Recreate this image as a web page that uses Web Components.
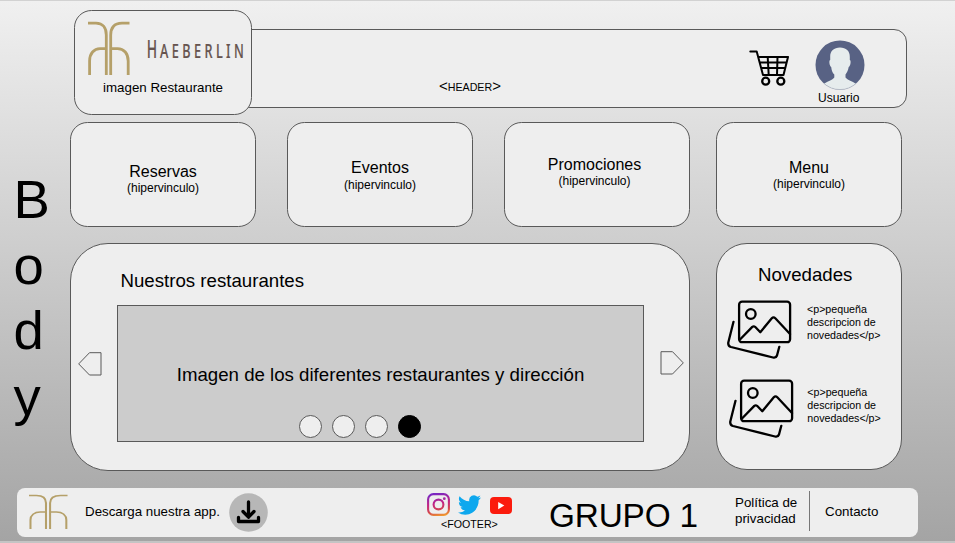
<!DOCTYPE html>
<html lang="es">
<head>
<meta charset="utf-8">
<title>Haeberlin</title>
<style>
html,body{margin:0;height:100%;overflow:hidden}
body{font-family:"Liberation Sans",Arial,sans-serif;color:#000}
</style>
</head>
<body>
<hb-page></hb-page>
<script>
const define=(name,html)=>customElements.define(name,class extends HTMLElement{
  constructor(){super();const t=document.createElement('template');t.innerHTML=html;
    this.attachShadow({mode:'open'}).append(t.content.cloneNode(true));}
});

/* Icons */
define('hb-emblem',`<style>:host{display:block;width:42px;height:54px}svg{display:block;width:100%;height:100%}</style>
<svg viewBox="0 0 42 54" preserveAspectRatio="none" fill="none" stroke="#b5a069" stroke-width="var(--sw,2.8)">
<path d="M0 2.200H8C15 2.200 18.300 7 18.300 14V54M41.500 2.200H34C26 2.200 22.700 7 22.700 14V54M1.600 54V40C1.600 32.500 6 27.700 12 27.700H18M23 27.700H29.500C36 27.700 40.200 32.500 40.200 40V54"/></svg>`);
define('hb-wordmark',`<style>:host{display:block;width:102px;height:38px}svg{display:block;overflow:visible}text{font-family:"Noto Sans","Open Sans",sans-serif;font-weight:500;fill:#66544f;stroke:#66544f;stroke-width:.2}</style>
<svg width="102" height="38"><g transform="scale(.65 1)"><text transform="translate(-2 29) scale(.87 1)" x="0" y="0" font-size="24.500">H</text><text x="18.500" y="29" font-size="19.500" textLength="129" lengthAdjust="spacing">AEBERLIN</text></g></svg>`);
define('hb-cart',`<style>:host{display:block;width:42px;height:38px}svg{display:block}</style>
<svg width="42" height="38" fill="none" stroke="#000" stroke-width="2" stroke-linecap="round" stroke-linejoin="round">
<path d="M1.300 2.600H7.700L14 26H34.500L39 7.900H9.200M10.600 13.400H37.500M12 19H36M18.700 8L19.700 26M28.500 8L28 26"/>
<circle cx="16.700" cy="32.200" r="3.500" stroke-width="2.300"/><circle cx="31.800" cy="32.200" r="3.500" stroke-width="2.300"/></svg>`);
define('hb-avatar',`<style>:host{display:block;width:50px;height:50px}svg{display:block}</style>
<svg width="50" height="50"><defs><clipPath id="c"><circle cx="25" cy="25" r="24.500"/></clipPath></defs>
<circle cx="25" cy="25" r="24.500" fill="#586284"/><path clip-path="url(#c)" fill="#e6eced" d="M25 7.500C31 7.500 35 11 34.800 17V20C36.300 20.200 35.600 26 33.700 27C33 31 31.500 33 30.500 34.500V37.500C33 40.500 38 41 43 45.500V50H7V45.500C12 41 17 40.500 19.300 37.500V34.500C17.500 33 16.600 30.500 16.200 27C14.400 26 13.700 20.200 15.200 20V17C14.900 11 19 7.500 25 7.500Z"/><path d="M8.500 43.200A24.500 24.500 0 0 0 41.500 43.200" fill="none" stroke="#a9b0bd" stroke-width=".6"/></svg>`);
define('hb-pictures',`<style>:host{display:block;width:66px;height:60px}svg{display:block}</style>
<svg width="66" height="60" fill="none" stroke="#000" stroke-width="2.300" stroke-linecap="round" stroke-linejoin="round">
<rect x="12.100" y="1.700" width="51" height="40.500" rx="3"/><circle cx="23.800" cy="14" r="4.800"/>
<path d="M13 39.500L25.300 26.900Q26.800 25.700 28.300 27L33.300 32.200L44.800 18.300Q46.500 16.500 48.300 18.300L63 34M6.500 21.800L1.300 42.500Q.8 46 4 47L46 57.500Q49 58.200 50 55.500L52.300 46.800"/></svg>`);
define('hb-download',`<style>:host{display:block;width:39px;height:39px}svg{display:block}</style>
<svg width="39" height="39" fill="none" stroke="#000" stroke-width="3.300" stroke-linecap="round" stroke-linejoin="round"><circle cx="19.500" cy="19.500" r="19.300" fill="#b7b7b7" stroke="none"/>
<path d="M19.500 9V23.500M14 18.500L19.500 24.200L25 18.500"/><path d="M9.500 24.500V28.500H29.500V24.500"/></svg>`);
define('hb-instagram',`<style>:host{display:block;width:23px;height:23px}svg{display:block}</style>
<svg width="23" height="23" fill="none" stroke="url(#g)"><defs><linearGradient id="g" gradientUnits="userSpaceOnUse" x1="9" y1="0" x2="14" y2="23"><stop stop-color="#7627c4"/><stop offset=".45" stop-color="#c32483"/><stop offset=".75" stop-color="#d3474f"/><stop offset="1" stop-color="#f09a30"/></linearGradient></defs>
<rect x="1.100" y="1.100" width="20.800" height="20.800" rx="5.300" stroke-width="2.100"/><circle cx="11.500" cy="11.500" r="4.900" stroke-width="2.100"/><circle cx="17.300" cy="5.700" r="1.400" fill="#a52aa0" stroke="none"/></svg>`);
define('hb-twitter',`<style>:host{display:block;width:23px;height:20px}svg{display:block;width:100%;height:100%}</style>
<svg viewBox="0 2 24 20" preserveAspectRatio="none" fill="#0ea8ee"><path d="M23.950 4.570a10 10 0 01-2.820.770 4.960 4.960 0 002.160-2.720c-.950.550-2 .950-3.130 1.180a4.920 4.920 0 00-8.380 4.480C7.690 8.100 4.070 6.130 1.640 3.160a4.820 4.820 0 00-.670 2.480c0 1.710.870 3.210 2.190 4.100a4.900 4.900 0 01-2.230-.620v.060a4.920 4.920 0 003.950 4.830 5 5 0 01-2.210.080 4.940 4.940 0 004.600 3.420A9.870 9.870 0 010 19.540a14 14 0 007.550 2.210c9.050 0 14-7.500 14-13.980 0-.210 0-.420-.020-.630a9.940 9.940 0 002.460-2.550z"/></svg>`);
define('hb-youtube',`<style>:host{display:block;width:22px;height:17px}svg{display:block}</style>
<svg width="22" height="17"><rect width="22" height="17" rx="4" fill="#fb1b0d"/><path d="M8.200 5V12.200L14.300 8.600Z" fill="#fff"/></svg>`);
define('hb-arrow',`<style>:host{display:block;width:24px;height:24px}:host([left]) svg{transform:scaleX(-1)}svg{display:block}</style>
<svg width="24" height="24" fill="none" stroke="#595959"><path d="M1 .700H12.500L23.300 11.900L12.500 23H1Z"/></svg>`);

/* Header */
define('hb-header',`<style>
:host{display:flex;align-items:flex-start;padding:9px 0 0 74px;height:112px;box-sizing:border-box}
.logo{box-sizing:border-box;width:178px;height:104.500px;border:1px solid #595959;border-radius:17.500px;background:#eee;z-index:1;padding:10px 0 0 13px;flex:none}
.brand{display:flex}.brand hb-wordmark{margin:8px 0 0 18px}
.logo p{margin:5px 0 0 15px;font-size:13.333px;line-height:16px}
.bar{box-sizing:border-box;display:flex;align-items:flex-start;width:670px;height:79px;margin:19px 0 0 -15px;border:1px solid #595959;border-radius:13px;background:#eee}
.title{margin:47px 0 0 201px;width:62px;font-size:15px;line-height:18px;white-space:nowrap}
.title span{font-size:10.667px}
hb-cart{margin:18.500px 0 0 248px}
.user{margin:10px 0 0 24px;width:50px;font-size:12px;line-height:15px}
.user div{margin:1px 0 0 3px}
</style>
<div class="logo"><div class="brand"><hb-emblem></hb-emblem><hb-wordmark></hb-wordmark></div><p>imagen Restaurante</p></div>
<div class="bar"><div class="title">&lt;<span>HEADER</span>&gt;</div><hb-cart></hb-cart><div class="user"><hb-avatar></hb-avatar><div>Usuario</div></div></div>`);

/* Link card */
define('hb-link-card',`<style>
:host{display:block;box-sizing:border-box;width:186px;height:105px;border:1px solid #595959;border-radius:17.500px;background:#eee;text-align:center;padding-top:var(--top,36px);padding-right:var(--shift,0)}
.t{font-size:16px;line-height:18px}.s{font-size:12px;line-height:15px;padding-top:var(--sub,0)}
</style><div class="t"><slot></slot></div><div class="s">(hipervinculo)</div>`);

/* Carousel */
define('hb-carousel',`<style>
:host{display:block;box-sizing:border-box;width:620px;height:228px;border:1px solid #595959;border-radius:38px;background:#eee;padding:26px 7px 0 7px}
h2{margin:0 0 0 42.500px;font-size:18.667px;font-weight:400;line-height:22px}
.row{display:flex;margin-top:13px}
.row hb-arrow{margin-top:47px;flex:none}.row hb-arrow[right]{margin:46px 0 0 16px}
.pic{box-sizing:border-box;flex:none;width:527px;height:137px;margin-left:15px;border:1px solid #595959;background:#ccc;font-size:18.667px;line-height:22px;text-align:center;padding-top:58px}
.dots{display:flex;gap:10px;margin:29px 0 0 181px}
.dots i{box-sizing:border-box;width:23px;height:23px;border:1px solid #595959;border-radius:50%;background:#eee}
.dots i:last-child{background:#000;border-color:#000}
</style><h2>Nuestros restaurantes</h2>
<div class="row"><hb-arrow left></hb-arrow><div class="pic">Imagen de los diferentes restaurantes y dirección<div class="dots"><i></i><i></i><i></i><i></i></div></div><hb-arrow right></hb-arrow></div>`);

/* News */
define('hb-news-item',`<style>:host{display:flex;height:78px}p{margin:var(--drop,2.500px) 0 0 var(--gap,14px);font-size:10.667px;line-height:13px;white-space:nowrap}</style>
<hb-pictures></hb-pictures><p>&lt;p&gt;pequeña<br>descripcion de<br>novedades&lt;/p&gt;</p>`);
define('hb-news',`<style>
:host{display:block;box-sizing:border-box;width:186px;height:226.500px;border:1px solid #595959;border-radius:31px;background:#eee;padding:20px 0 0 10px}
h2{margin:0 0 14px 31px;font-size:18.667px;font-weight:400;line-height:22px}
.second{margin:1px 0 0 2px;--gap:12.300px;--drop:7px}
</style><h2>Novedades</h2><hb-news-item></hb-news-item><hb-news-item class="second"></hb-news-item>`);

/* Footer */
define('hb-footer',`<style>
:host{display:flex;align-items:flex-start;box-sizing:border-box;width:901px;height:48.500px;margin-left:17px;border-radius:8px;background:#eee;font-size:13.333px;line-height:16px;white-space:nowrap}
hb-emblem{width:39px;height:35px;margin:5.500px 0 0 12px;--sw:2.2}
.app{margin:16px 0 0 17px;width:135px}
hb-download{margin:4.500px 0 0 8.500px}
.social{width:85px;margin:5px 0 0 159.500px}
.icons{display:flex;align-items:flex-start}.icons hb-twitter{margin:2px 0 0 8px}.icons hb-youtube{margin:4px 0 0 9px}
.social p{margin:2px 0 0 14px;font-size:10.667px;line-height:13px}
.group{margin:8px 0 0 37px;width:150px;font-size:33.333px;line-height:40px;letter-spacing:-.15px}
.policy{margin:7px 0 0 36px;width:62px}
.line{width:1px;height:40px;margin:3px 0 0 12px;background:#777}
.contact{margin:16px 0 0 15px}
</style><hb-emblem></hb-emblem><div class="app">Descarga nuestra app.</div><hb-download></hb-download>
<div class="social"><div class="icons"><hb-instagram></hb-instagram><hb-twitter></hb-twitter><hb-youtube></hb-youtube></div><p>&lt;FOOTER&gt;</p></div>
<div class="group">GRUPO 1</div><div class="policy">Política de<br>privacidad</div><div class="line"></div><div class="contact">Contacto</div>`);

/* Page */
define('hb-page',`<style>
:host{display:block;box-sizing:border-box;width:955px;height:543px;background:linear-gradient(#f0f0f0,#a4a4a4);border-top:1px solid #d2d2d2;border-bottom:2px solid #c4c4c4}
.middle{display:flex;height:375px}
.body{width:70px;box-sizing:border-box;padding:54px 0 0 13.500px;font-size:54.500px;line-height:65.600px}
.body div{height:65.600px}
.links,.panels{display:flex}
.links{gap:31px;padding-top:9px}
.links hb-link-card:last-child{margin-left:-5px}
.panels{gap:26px;margin-top:16px}
</style>
<hb-header></hb-header>
<div class="middle"><div class="body"><div>B</div><div>o</div><div>d</div><div>y</div></div>
<div><div class="links"><hb-link-card style="--top:40px">Reservas</hb-link-card><hb-link-card style="--sub:1px">Eventos</hb-link-card><hb-link-card style="--top:33px;--shift:5px">Promociones</hb-link-card><hb-link-card>Menu</hb-link-card></div>
<div class="panels"><hb-carousel></hb-carousel><hb-news></hb-news></div></div></div>
<hb-footer></hb-footer>`);
</script>
</body>
</html>
